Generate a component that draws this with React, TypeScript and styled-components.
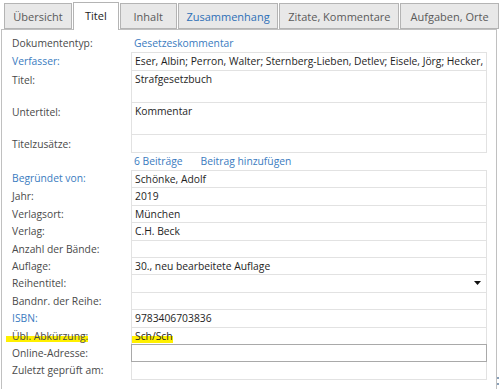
import React from 'react';
import styled, { createGlobalStyle } from 'styled-components';

const GlobalStyle = createGlobalStyle`
    body {
        margin: 0;
        background: #ffffff;
        font-family: 'Open Sans', 'Noto Sans', sans-serif;
    }
`;

type Field = {
    label: string;
    value?: string;
    blue?: boolean;
    tall?: boolean;
    mark?: boolean;
    focus?: boolean;
    select?: boolean;
};

const tabs = [
    { name: 'Übersicht', width: 68 },
    { name: 'Titel', width: 46, active: true },
    { name: 'Inhalt', width: 57 },
    { name: 'Zusammenhang', width: 101, link: true },
    { name: 'Zitate, Kommentare', width: 120 },
    { name: 'Aufgaben, Orte', width: 99 },
];

const titleFields: Field[] = [
    {
        label: 'Verfasser:',
        blue: true,
        value: 'Eser, Albin; Perron, Walter; Sternberg-Lieben, Detlev; Eisele, Jörg; Hecker, Bernd',
    },
    { label: 'Titel:', value: 'Strafgesetzbuch', tall: true },
    { label: 'Untertitel:', value: 'Kommentar', tall: true },
    { label: 'Titelzusätze:' },
];

const bookFields: Field[] = [
    { label: 'Begründet von:', value: 'Schönke, Adolf', blue: true },
    { label: 'Jahr:', value: '2019' },
    { label: 'Verlagsort:', value: 'München' },
    { label: 'Verlag:', value: 'C.H. Beck' },
    { label: 'Anzahl der Bände:' },
    { label: 'Auflage:', value: '30., neu bearbeitete Auflage' },
    { label: 'Reihentitel:', select: true },
    { label: 'Bandnr. der Reihe:' },
    { label: 'ISBN:', value: '9783406703836', blue: true },
    { label: 'Übl. Abkürzung:', value: 'Sch/Sch', mark: true },
    { label: 'Online-Adresse:', focus: true },
    { label: 'Zuletzt geprüft am:' },
];

const renderRows = (fields: Field[], rowHeight: number) =>
    fields.map((field, index) => (
        <Row key={field.label}>
            <Label blue={field.blue} rowHeight={rowHeight}>
                {field.mark ? <Marker>{field.label}</Marker> : field.label}
            </Label>
            <Value
                first={index === 0}
                focus={field.focus}
                rowHeight={field.tall ? 32 : rowHeight}
            >
                {field.mark ? <Marker>{field.value}</Marker> : field.value}
                {field.select && (
                    <Caret viewBox="0 0 7 4">
                        <path d="M0 0h7L3.5 4z" fill="#111" />
                    </Caret>
                )}
            </Value>
        </Row>
    ));

const App = () => (
    <Window>
        <GlobalStyle />
        <TabBar>
            {tabs.map(({ name, width, active, link }) => (
                <Tab key={name} active={active} link={link} style={{ width }}>
                    {name}
                </Tab>
            ))}
            <TabFiller />
        </TabBar>
        <Panel>
            <Row>
                <Label rowHeight={17}>Dokumententyp:</Label>
                <Plain>
                    <Link>Gesetzeskommentar</Link>
                </Plain>
            </Row>
            <Group>{renderRows(titleFields, 18)}</Group>
            <Row>
                <Label rowHeight={17} />
                <Plain>
                    <Link>6 Beiträge</Link>
                    <Link>Beitrag hinzufügen</Link>
                </Plain>
            </Row>
            <Group>{renderRows(bookFields, 17.4)}</Group>
        </Panel>
        <Grip>
            <i />
            <i />
        </Grip>
    </Window>
);

const Window = styled.div`
    position: relative;
    width: 500px;
    height: 389px;
    overflow: hidden;
    background: #ffffff;
    font-size: 10.3px;
`;

const TabBar = styled.div`
    display: flex;
    align-items: flex-end;
    height: 29px;
    padding-left: 4px;
`;

const Tab = styled.div<{ active?: boolean; link?: boolean }>`
    box-sizing: border-box;
    height: ${({ active }) => (active ? '28px' : '26px')};
    margin-bottom: ${({ active }) => (active ? '-1px' : '0')};
    margin-right: 1px;
    display: flex;
    align-items: center;
    justify-content: center;
    padding-bottom: ${({ active }) => (active ? '2px' : '0')};
    border: 1px solid #b4b4b4;
    border-bottom: ${({ active }) => (active ? 'none' : '1px solid #b4b4b4')};
    background: ${({ active }) => (active ? '#ffffff' : '#e8e8e8')};
    color: ${({ active, link }) =>
        link ? '#2d6fb7' : active ? '#222222' : '#5a5a5a'};
    font-size: 11px;
    white-space: nowrap;
    position: relative;
    z-index: ${({ active }) => (active ? 1 : 0)};
`;

const TabFiller = styled.div`
    flex: 1;
`;

const Panel = styled.div`
    box-sizing: border-box;
    width: 496px;
    height: 360px;
    margin-left: 1px;
    padding: 5px 0 0 10px;
    border: 1px solid #c0c0c0;
    border-bottom: none;
`;

const Group = styled.div`
    display: flex;
    flex-direction: column;
`;

const Row = styled.div`
    display: grid;
    grid-template-columns: 119px 356px;
`;

const Label = styled.div<{ blue?: boolean; rowHeight: number }>`
    line-height: ${({ rowHeight }) => rowHeight}px;
    color: ${({ blue }) => (blue ? '#3a7bc0' : '#4a4a4a')};
    white-space: nowrap;
`;

const Marker = styled.span`
    margin-left: -6px;
    padding-left: 6px;
    background: linear-gradient(
        transparent 48%,
        #fff000 48%,
        #fff000 95%,
        transparent 95%
    );
`;

const Value = styled.div<{ first?: boolean; focus?: boolean; rowHeight: number }>`
    box-sizing: border-box;
    display: flex;
    align-items: flex-start;
    height: ${({ rowHeight, first, focus }) =>
        rowHeight + (first || focus ? 1 : 0)}px;
    margin-top: ${({ focus }) => (focus ? '-1px' : '0')};
    padding: 0 5px 0 3px;
    line-height: 16px;
    border: 1px solid ${({ focus }) => (focus ? '#a9a9a9' : '#e2e2e2')};
    border-top: ${({ first, focus }) =>
        first || focus ? `1px solid ${focus ? '#a9a9a9' : '#e2e2e2'}` : 'none'};
    color: #1e1e1e;
    white-space: nowrap;
    overflow: hidden;
`;

const Plain = styled.div`
    display: flex;
    gap: 18px;
    height: 17px;
    line-height: 17px;
    padding-left: 3px;
`;

const Link = styled.span`
    color: #3a7bc0;
`;

const Caret = styled.svg`
    flex: none;
    width: 7px;
    height: 4px;
    margin: 6px 0 0 auto;
`;

const Grip = styled.div`
    position: absolute;
    right: 1px;
    bottom: 4px;
    display: flex;
    flex-direction: column;
    gap: 4px;
    & i {
        width: 2px;
        height: 2px;
        background: #8aa0b8;
    }
`;

export default App;
